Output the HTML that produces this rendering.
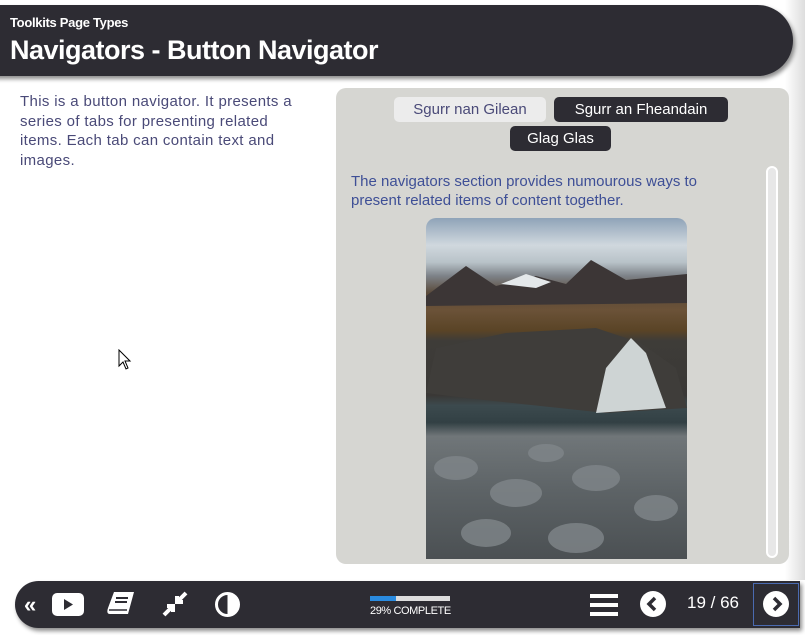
<!DOCTYPE html>
<html><head><style>
*{margin:0;padding:0;box-sizing:border-box}
body{width:805px;height:635px;background:#fff;font-family:"Liberation Sans",sans-serif;position:relative;overflow:hidden}
.hdr{position:absolute;left:-10px;top:5px;width:803px;height:71px;background:#2d2c33;border-radius:0 40px 40px 0;box-shadow:2px 3px 4px rgba(0,0,0,.45)}
.hdr .s{position:absolute;left:20px;top:10px;color:#fff;font-size:13px;font-weight:bold;letter-spacing:-.3px}
.hdr .t{position:absolute;left:20px;top:30px;color:#fff;font-size:27px;font-weight:bold;letter-spacing:-.5px}
.edge{position:absolute;right:0;top:0;width:20px;height:580px;background:linear-gradient(90deg,#fff,#ddd)}
.left{position:absolute;left:20px;top:92px;width:290px;color:#4a4a78;font-size:15px;line-height:19.5px;letter-spacing:.35px}
.panel{position:absolute;left:336px;top:88px;width:453px;height:476px;background:#d6d6d2;border-radius:10px}
.tab{position:absolute;height:25px;border-radius:5px;font-size:15px;line-height:25px;text-align:center}
.on{background:#2d2c33;color:#fff}
.off{background:#ececec;color:#4a4a78}
.ptxt{position:absolute;left:351px;top:172px;width:400px;color:#3e4f96;font-size:15px;line-height:19px}
.img{position:absolute;left:426px;top:218px;width:261px;height:341px;border-radius:10px 10px 0 0;overflow:hidden;
background:linear-gradient(180deg,#8fa3b8 0%,#d0d8de 8%,#b8c2c8 13%,#7d8288 17%,#5a4a3a 22%,#6b5238 27%,#5a4426 33%,#3e3c38 36%,#3a3836 52%,#3c4a4e 55%,#324044 60%,#707679 64%,#5d6366 80%,#4b5053 100%)}
.sb{position:absolute;left:766px;top:166px;width:12px;height:392px;border-radius:6px;border:2px solid #fff;background:#e7e7e7}
.ftr{position:absolute;left:15px;top:581px;width:785px;height:47px;background:#2d2c33;border-radius:24px 0 0 24px;box-shadow:2px 3px 4px rgba(0,0,0,.45)}
.w{position:absolute;color:#fff}
</style></head><body>
<div class="edge"></div>
<div class="hdr"><div class="s">Toolkits Page Types</div><div class="t">Navigators - Button Navigator</div></div>
<div class="left">This is a button navigator. It presents a series of tabs for presenting related items. Each tab can contain text and images.</div>
<div class="panel"></div>
<div class="tab off" style="left:394px;top:97px;width:152px">Sgurr nan Gilean</div>
<div class="tab on" style="left:554px;top:97px;width:174px">Sgurr an Fheandain</div>
<div class="tab on" style="left:510px;top:126px;width:101px">Glag Glas</div>
<div class="ptxt">The navigators section provides numourous ways to present related items of content together.</div>
<div class="img">
<svg width="261" height="341" style="position:absolute;left:0;top:0">
<polygon points="0,78 40,48 70,68 110,58 140,66 165,42 200,62 261,56 261,85 0,88" fill="#3c3636"/>
<polygon points="75,66 100,56 125,64 110,70" fill="#e4e8ea"/>
<polygon points="10,130 80,115 170,110 215,125 250,150 261,190 180,195 40,180 0,175" fill="#3f3d3a"/>
<polygon points="205,120 220,135 240,190 170,195 180,150" fill="#e8eef0" opacity=".85"/>
<g fill="#80868a" opacity=".8"><ellipse cx="30" cy="250" rx="22" ry="12"/><ellipse cx="90" cy="275" rx="26" ry="14"/><ellipse cx="170" cy="260" rx="24" ry="13"/><ellipse cx="230" cy="290" rx="22" ry="13"/><ellipse cx="60" cy="315" rx="25" ry="14"/><ellipse cx="150" cy="320" rx="28" ry="15"/><ellipse cx="120" cy="235" rx="18" ry="9"/></g>
</svg>
</div>
<div class="sb"></div>
<svg style="position:absolute;left:118px;top:349px" width="14" height="22"><path d="M1,1 L1,17 L5,13 L8,20 L10,19 L7,12 L12,12 Z" fill="#fff" stroke="#000"/></svg>
<div class="ftr"></div>
<div class="w" style="left:24px;top:592px;font-size:22px;font-weight:bold">«</div>
<svg style="position:absolute;left:52px;top:593px" width="32" height="23"><rect width="32" height="23" rx="5" fill="#fff"/><path d="M12,6 L21,11.5 L12,17Z" fill="#2d2c33"/></svg>
<svg style="position:absolute;left:106px;top:590px" width="30" height="28"><path d="M8,2 H28 L22,24 H4 Q0,24 2,18 Z" fill="#fff"/><path d="M10,8 H22 M9,12 H21" stroke="#2d2c33" stroke-width="2"/><path d="M3,20 H21" stroke="#2d2c33" stroke-width="1.5"/></svg>
<svg style="position:absolute;left:162px;top:591px" width="26" height="26"><path d="M24,2 L15,11 M15,5 V11 H21 M2,24 L11,15 M5,15 H11 V21" stroke="#fff" stroke-width="4" fill="none"/></svg>
<svg style="position:absolute;left:214px;top:591px" width="27" height="27"><circle cx="13.5" cy="13.5" r="11" stroke="#fff" stroke-width="3" fill="none"/><path d="M13.5,2.5 A11,11 0 0 1 13.5,24.5Z" fill="#fff"/></svg>
<div style="position:absolute;left:370px;top:596px;width:80px;height:5px;background:#ddd"><div style="width:26px;height:5px;background:#2a8be0"></div></div>
<div class="w" style="left:370px;top:605px;font-size:11px;letter-spacing:-.4px">29% COMPLETE</div>
<svg style="position:absolute;left:590px;top:593px" width="28" height="24"><path d="M0,3 H28 M0,12 H28 M0,21 H28" stroke="#fff" stroke-width="4"/></svg>
<svg style="position:absolute;left:640px;top:591px" width="26" height="26"><circle cx="13" cy="13" r="13" fill="#fff"/><path d="M15,7 L9,13 L15,19" stroke="#2d2c33" stroke-width="3.5" fill="none"/></svg>
<div class="w" style="left:687px;top:593px;font-size:17px">19 / 66</div>
<div style="position:absolute;left:753px;top:583px;width:46px;height:43px;border:1px solid #4a6ab0"></div>
<svg style="position:absolute;left:763px;top:591px" width="26" height="26"><circle cx="13" cy="13" r="13" fill="#fff"/><path d="M11,7 L17,13 L11,19" stroke="#2d2c33" stroke-width="3.5" fill="none"/></svg>
</body></html>
